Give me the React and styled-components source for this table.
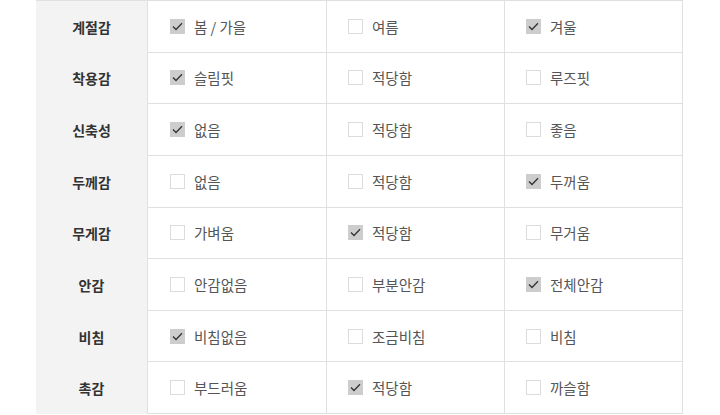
import React from 'react';
import styled, { createGlobalStyle } from 'styled-components';

const GlobalStyle = createGlobalStyle`
  body {
    margin: 0;
    background: #fff;
    font-family: "Noto Sans CJK KR", "Noto Sans", sans-serif;
  }
`;

const Page = styled.div`
  width: 720px;
  height: 415px;
  overflow: hidden;
  padding-left: 36px;
  box-sizing: border-box;
`;

const Table = styled.div`
  width: 647px;
  display: grid;
  grid-template-columns: 112px 179px 178px 178px;
  grid-auto-rows: 51.65px;
  border-top: 1px solid #e0e0e0;
`;

const Head = styled.div`
  background: #f3f3f3;
  display: flex;
  align-items: center;
  justify-content: center;
  font-size: 14px;
  font-weight: 700;
  color: #333;
  border-right: 1px solid #e0e0e0;
`;

const Cell = styled.div`
  display: flex;
  align-items: center;
  gap: 9px;
  padding-left: ${(p) => (p.$first ? 22 : 21)}px;
  border-right: 1px solid #e0e0e0;
  border-bottom: 1px solid #e0e0e0;
  font-size: 14.5px;
  color: #555;
`;

const Box = styled.span`
  width: 15px;
  height: 15px;
  flex: none;
  box-sizing: border-box;
  display: inline-flex;
  align-items: center;
  justify-content: center;
  background: ${(p) => (p.$on ? '#cdcdcd' : '#fff')};
  border: 1px solid ${(p) => (p.$on ? '#cdcdcd' : '#dcdcdc')};
`;

const rows = [
  ['계절감', [['봄 / 가을', 1], ['여름', 0], ['겨울', 1]]],
  ['착용감', [['슬림핏', 1], ['적당함', 0], ['루즈핏', 0]]],
  ['신축성', [['없음', 1], ['적당함', 0], ['좋음', 0]]],
  ['두께감', [['없음', 0], ['적당함', 0], ['두꺼움', 1]]],
  ['무게감', [['가벼움', 0], ['적당함', 1], ['무거움', 0]]],
  ['안감', [['안감없음', 0], ['부분안감', 0], ['전체안감', 1]]],
  ['비침', [['비침없음', 1], ['조금비침', 0], ['비침', 0]]],
  ['촉감', [['부드러움', 0], ['적당함', 1], ['까슬함', 0]]],
];

const Check = ({ on }) => (
  <Box $on={on}>
    {on ? (
      <svg width="11" height="9" viewBox="0 0 11 9">
        <path d="M1 4.5 L4 7.5 L10 1.2" fill="none" stroke="#333" strokeWidth="1.3" />
      </svg>
    ) : null}
  </Box>
);

export default function App() {
  return (
    <Page>
      <GlobalStyle />
      <Table>
        {rows.map(([name, opts]) => (
          <React.Fragment key={name}>
            <Head>{name}</Head>
            {opts.map(([label, on], i) => (
              <Cell key={i} $first={i === 0}>
                <Check on={!!on} />
                {label}
              </Cell>
            ))}
          </React.Fragment>
        ))}
      </Table>
    </Page>
  );
}
